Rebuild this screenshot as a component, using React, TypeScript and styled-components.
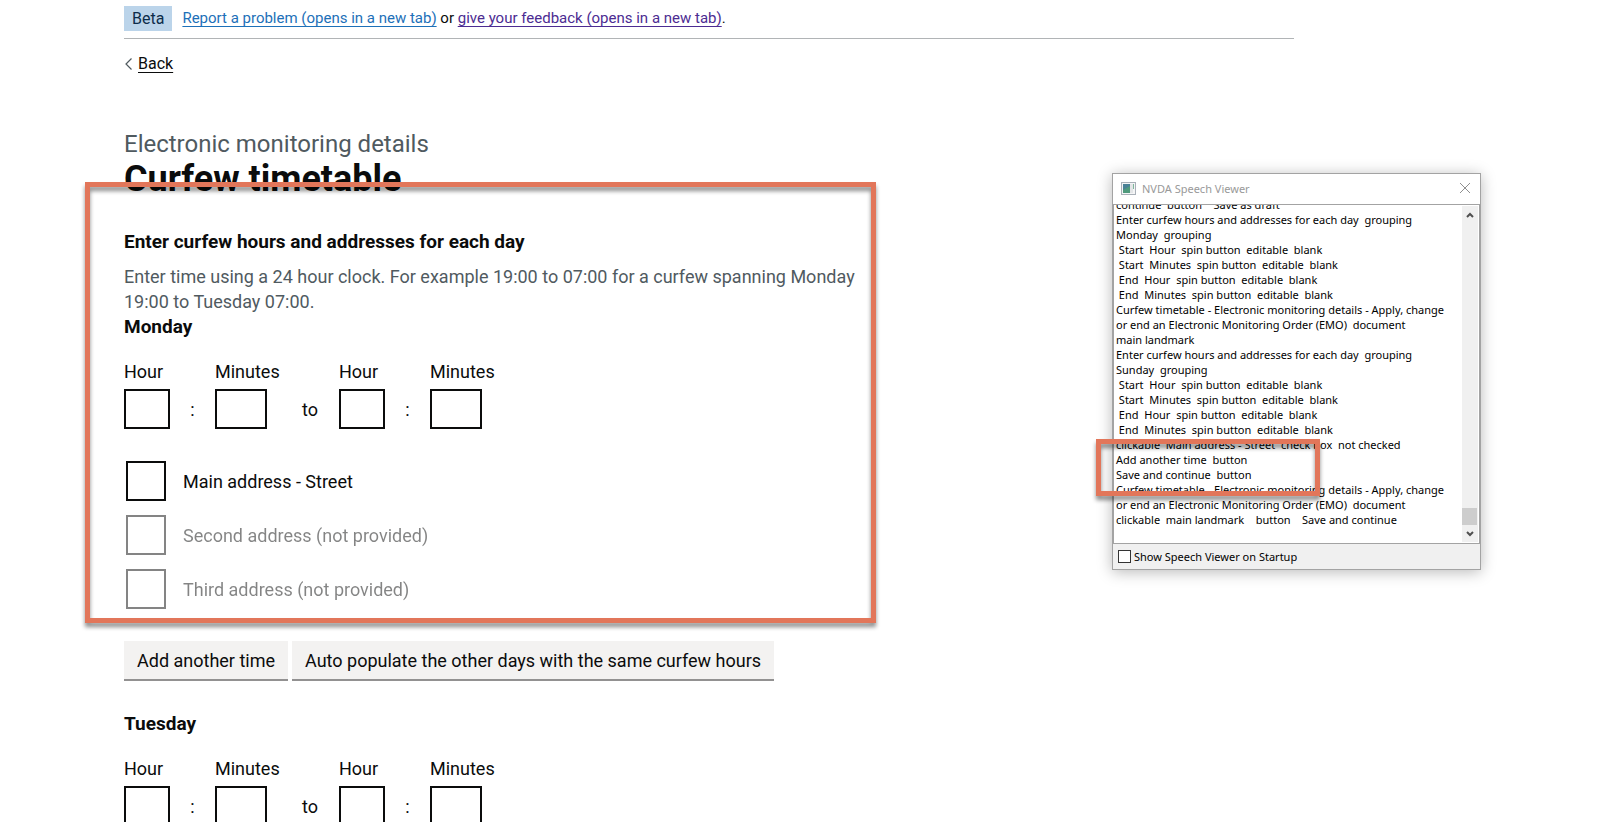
import React, { useEffect, useId, useRef } from "react";
import styled, { createGlobalStyle } from "styled-components";

const GlobalStyle = createGlobalStyle`
  * {
    box-sizing: border-box;
  }
  body {
    margin: 0;
    background: #ffffff;
    color: #0b0c0c;
    font-family: Roboto, "Liberation Sans", sans-serif;
    font-size: 18px;
    line-height: 25px;
  }
`;

const Page = styled.div`
  position: relative;
  height: 100vh;
  overflow: hidden;
`;

const Container = styled.div`
  max-width: 1170px;
  margin-left: 124px;
  margin-right: 30px;
`;

const PhaseBanner = styled.div`
  display: flex;
  align-items: center;
  gap: 10px;
  padding: 6px 0 7px;
  border-bottom: 1px solid #b1b4b6;
  font-size: 16px;
`;

const Tag = styled.strong`
  padding: 0 8px;
  background: #bbd4ea;
  color: #0c2d4a;
  font-weight: 400;
`;

const BannerText = styled.span`
  font-size: 15px;
`;

const TextLink = styled.a<{ $visited?: boolean }>`
  color: ${(p) => (p.$visited ? "#4c2c92" : "#1d70b8")};
  text-decoration: underline;
  text-decoration-thickness: 1px;
  text-underline-offset: 3px;
`;

const BackLink = styled.a`
  display: inline-flex;
  align-items: center;
  gap: 5px;
  margin-top: 12px;
  color: #0b0c0c;
  font-size: 16px;
  text-decoration: underline;
  text-decoration-thickness: 1px;
  text-underline-offset: 3px;
`;

const Main = styled.main`
  padding-top: 53px;
`;

const Caption = styled.span`
  display: block;
  color: #505a5f;
  font-size: 24px;
  line-height: 30px;
`;

const Title = styled.h1`
  margin: 0 0 30px;
  font-size: 36px;
  line-height: 40px;
`;

const Group = styled.fieldset`
  margin: 0;
  padding: 0;
  border: 0;
  min-width: 0;
`;

const Legend = styled.legend`
  display: block;
  padding: 0;
  font-size: 19px;
  font-weight: 700;
`;

const Hint = styled.p`
  max-width: 765px;
  margin: 10px 0 0;
  color: #505a5f;
`;

const TimeRow = styled.div`
  display: grid;
  grid-template-columns: 46px 45px 66px 58px 46px 45px 66px;
  align-items: end;
  margin-top: 20px;
`;

const Field = styled.div`
  display: flex;
  flex-direction: column;
  gap: 5px;
`;

const TimeInput = styled.input<{ $wide?: boolean }>`
  width: ${(p) => (p.$wide ? "52px" : "46px")};
  height: 40px;
  padding: 5px;
  border: 2px solid #0b0c0c;
  border-radius: 0;
  background: #ffffff;
  font: inherit;
`;

const Separator = styled.span`
  padding-bottom: 7px;
  text-align: center;
`;

const Choices = styled.div`
  display: flex;
  flex-direction: column;
  gap: 14px;
  margin: 32px 0;
  padding-left: 2px;
`;

const Choice = styled.label<{ $disabled?: boolean }>`
  display: flex;
  align-items: center;
  gap: 17px;
  opacity: ${(p) => (p.$disabled ? 0.5 : 1)};
`;

const Checkbox = styled.input`
  appearance: none;
  width: 40px;
  height: 40px;
  margin: 0;
  border: 2px solid #0b0c0c;
  background: #ffffff;
`;

const Actions = styled.div`
  display: flex;
  gap: 4px;
  margin-bottom: 32px;
`;

const SecondaryButton = styled.button`
  height: 38px;
  padding: 0 13px;
  border: 0;
  background: #f3f2f1;
  box-shadow: 0 2px 0 #929191;
  color: #0b0c0c;
  font: inherit;
`;

const Highlight = styled.div`
  position: absolute;
  border: 5px solid #e2765a;
  pointer-events: none;
  filter: drop-shadow(0 4px 2px rgba(0, 0, 0, 0.45));
`;

const FormHighlight = styled(Highlight)`
  top: 182px;
  left: 85px;
  width: 791px;
  height: 441px;
`;

const SpeechHighlight = styled(Highlight)`
  top: 265px;
  left: -17px;
  width: 224px;
  height: 57px;
`;

const Window = styled.section`
  position: absolute;
  top: 173px;
  left: 1112px;
  width: 369px;
  border: 1px solid #a3a3a3;
  background: #f0f0f0;
  box-shadow: 0 2px 14px rgba(0, 0, 0, 0.28);
  color: #000000;
  font-family: "Noto Sans", sans-serif;
  font-size: 11px;
  line-height: 15px;
`;

const TitleBar = styled.header`
  display: flex;
  align-items: center;
  gap: 5px;
  height: 30px;
  padding: 0 8px 2px;
  background: #ffffff;
  color: #999999;
`;

const WindowTitle = styled.span`
  flex: 1;
`;

const IconButton = styled.button`
  display: flex;
  padding: 0;
  border: 0;
  background: none;
`;

const LogPane = styled.div`
  display: flex;
  border: 1px solid #a3a3a3;
  background: #ffffff;
`;

const SpeechLog = styled.textarea`
  flex: 1;
  min-width: 0;
  height: 338px;
  padding: 0 0 1px 2px;
  border: 0;
  outline: 0;
  resize: none;
  overflow: hidden;
  background: #ffffff;
  color: #000000;
  font: inherit;
  white-space: pre;
`;

const ScrollBar = styled.div`
  display: flex;
  flex-direction: column;
  width: 16px;
  margin: 1px 1px 1px 0;
  background: #f0f0f0;
`;

const ScrollButton = styled.button`
  display: flex;
  align-items: center;
  justify-content: center;
  height: 17px;
  padding: 0;
  border: 0;
  background: none;
`;

const ScrollTrack = styled.div`
  display: flex;
  flex: 1;
  align-items: flex-end;
`;

const ScrollThumb = styled.div`
  width: 15px;
  height: 17px;
  background: #cdcdcd;
`;

const StartupOption = styled.label`
  display: flex;
  align-items: center;
  gap: 3px;
  height: 25px;
  padding-left: 5px;
`;

const StartupCheckbox = styled.input`
  appearance: none;
  width: 13px;
  height: 13px;
  margin: 0;
  border: 1px solid #333333;
  background: #ffffff;
`;

const SPEECH = [
  "continue  button    Save as draft",
  "Enter curfew hours and addresses for each day  grouping",
  "Monday  grouping",
  " Start  Hour  spin button  editable  blank",
  " Start  Minutes  spin button  editable  blank",
  " End  Hour  spin button  editable  blank",
  " End  Minutes  spin button  editable  blank",
  "Curfew timetable - Electronic monitoring details - Apply, change",
  "or end an Electronic Monitoring Order (EMO)  document",
  "main landmark",
  "Enter curfew hours and addresses for each day  grouping",
  "Sunday  grouping",
  " Start  Hour  spin button  editable  blank",
  " Start  Minutes  spin button  editable  blank",
  " End  Hour  spin button  editable  blank",
  " End  Minutes  spin button  editable  blank",
  "clickable  Main address - Street  check box  not checked",
  "Add another time  button",
  "Save and continue  button",
  "Curfew timetable - Electronic monitoring details - Apply, change",
  "or end an Electronic Monitoring Order (EMO)  document",
  "clickable  main landmark    button    Save and continue",
  "",
].join("\n");

function TimeField({ label, wide }: { label: string; wide?: boolean }) {
  const id = useId();
  return (
    <Field>
      <label htmlFor={id}>{label}</label>
      <TimeInput id={id} $wide={wide} inputMode="numeric" />
    </Field>
  );
}

function TimeRange() {
  return (
    <TimeRow>
      <TimeField label="Hour" />
      <Separator>:</Separator>
      <TimeField label="Minutes" wide />
      <Separator>to</Separator>
      <TimeField label="Hour" />
      <Separator>:</Separator>
      <TimeField label="Minutes" wide />
    </TimeRow>
  );
}

function SpeechViewer() {
  const log = useRef<HTMLTextAreaElement>(null);
  useEffect(() => {
    if (log.current) log.current.scrollTop = log.current.scrollHeight;
  }, []);
  return (
    <Window aria-label="NVDA Speech Viewer">
      <TitleBar>
        <svg width="16" height="13" viewBox="0 0 16 13" aria-hidden="true">
          <rect x="0.5" y="0.5" width="14" height="12" fill="#f4f5f6" stroke="#a9b0b8" />
          <rect x="2" y="2" width="7" height="9" fill="#4a8296" />
          <path d="M2 11V8L9 4v7z" fill="#4f9a7c" />
          <rect x="9" y="2" width="3" height="9" fill="#e3e5e7" />
          <rect x="12" y="2" width="1" height="5" fill="#7fb69b" />
        </svg>
        <WindowTitle>NVDA Speech Viewer</WindowTitle>
        <IconButton aria-label="Close">
          <svg width="14" height="12" viewBox="0 0 14 12" aria-hidden="true">
            <path d="M2 1l10 10M12 1L2 11" stroke="#8f8f8f" fill="none" />
          </svg>
        </IconButton>
      </TitleBar>
      <LogPane>
        <SpeechLog ref={log} readOnly aria-label="Speech log" defaultValue={SPEECH} />
        <ScrollBar>
          <ScrollButton aria-label="Scroll up">
            <svg width="8" height="6" viewBox="0 0 8 6" aria-hidden="true">
              <path d="M1 5l3-3 3 3" stroke="#505050" strokeWidth="2" fill="none" />
            </svg>
          </ScrollButton>
          <ScrollTrack>
            <ScrollThumb />
          </ScrollTrack>
          <ScrollButton aria-label="Scroll down">
            <svg width="8" height="6" viewBox="0 0 8 6" aria-hidden="true">
              <path d="M1 1l3 3 3-3" stroke="#505050" strokeWidth="2" fill="none" />
            </svg>
          </ScrollButton>
        </ScrollBar>
      </LogPane>
      <StartupOption>
        <StartupCheckbox type="checkbox" />
        Show Speech Viewer on Startup
      </StartupOption>
      <SpeechHighlight />
    </Window>
  );
}

export default function App() {
  return (
    <Page>
      <GlobalStyle />
      <Container>
        <PhaseBanner>
          <Tag>Beta</Tag>
          <BannerText>
            <TextLink href="#report">Report a problem (opens in a new tab)</TextLink> or{" "}
            <TextLink href="#feedback" $visited>
              give your feedback (opens in a new tab)
            </TextLink>
            .
          </BannerText>
        </PhaseBanner>
        <BackLink href="#back">
          <svg width="9" height="12" viewBox="0 0 9 12" aria-hidden="true">
            <path d="M7.500 0.500L2 6l5.500 5.500" stroke="#505a5f" strokeWidth="1.200" fill="none" />
          </svg>
          Back
        </BackLink>
        <Main>
          <Caption>Electronic monitoring details</Caption>
          <Title>Curfew timetable</Title>
          <Group>
            <Legend>Enter curfew hours and addresses for each day</Legend>
            <Hint>
              Enter time using a 24 hour clock. For example 19:00 to 07:00 for a curfew spanning
              Monday 19:00 to Tuesday 07:00.
            </Hint>
            <Group>
              <Legend>Monday</Legend>
              <TimeRange />
              <Choices>
                <Choice>
                  <Checkbox type="checkbox" />
                  Main address - Street
                </Choice>
                <Choice $disabled>
                  <Checkbox type="checkbox" disabled />
                  Second address (not provided)
                </Choice>
                <Choice $disabled>
                  <Checkbox type="checkbox" disabled />
                  Third address (not provided)
                </Choice>
              </Choices>
              <Actions>
                <SecondaryButton type="button">Add another time</SecondaryButton>
                <SecondaryButton type="button">
                  Auto populate the other days with the same curfew hours
                </SecondaryButton>
              </Actions>
            </Group>
            <Group>
              <Legend>Tuesday</Legend>
              <TimeRange />
            </Group>
          </Group>
        </Main>
      </Container>
      <FormHighlight />
      <SpeechViewer />
    </Page>
  );
}
